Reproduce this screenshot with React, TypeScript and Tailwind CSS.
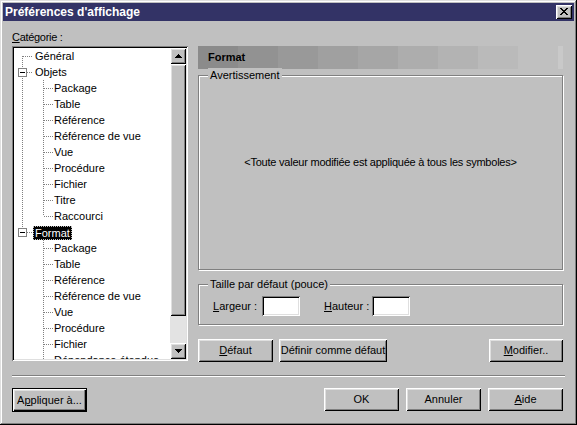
import React from 'react';

const raised =
  'shadow-[inset_1px_1px_0_#fff,inset_-1px_-1px_0_#000,inset_2px_2px_0_#dfdfdf,inset_-2px_-2px_0_#808080]';
const sunken =
  'shadow-[inset_1px_1px_0_#808080,inset_-1px_-1px_0_#fff,inset_2px_2px_0_#000,inset_-2px_-2px_0_#dfdfdf]';

type Row = { label: string; level: 0 | 1; box?: boolean; selected?: boolean };

const objets = ['Package', 'Table', 'Référence', 'Référence de vue', 'Vue', 'Procédure', 'Fichier', 'Titre', 'Raccourci'];
const formats = ['Package', 'Table', 'Référence', 'Référence de vue', 'Vue', 'Procédure', 'Fichier', 'Dépendance étendue'];

const rows: Row[] = [
  { label: 'Général', level: 0 },
  { label: 'Objets', level: 0, box: true },
  ...objets.map((label) => ({ label, level: 1 as const })),
  { label: 'Format', level: 0, box: true, selected: true },
  ...formats.map((label) => ({ label, level: 1 as const })),
];

function Btn({ children, className = '' }: { children: React.ReactNode; className?: string }) {
  return (
    <button className={`${raised} bg-[#c0c0c0] h-[23px] flex items-center justify-center ${className}`}>
      {children}
    </button>
  );
}

function Group({ label, className = '', children }: { label: string; className?: string; children?: React.ReactNode }) {
  return (
    <div className={`relative border border-[#808080] shadow-[inset_1px_1px_0_#fff,1px_1px_0_#fff] ${className}`}>
      <span className="absolute -top-[8px] left-[9px] px-[2px] bg-[#c0c0c0] leading-[14px]">{label}</span>
      {children}
    </div>
  );
}

function Arrow({ down }: { down?: boolean }) {
  return (
    <svg width="7" height="4" viewBox="0 0 7 4">
      <path
        fill="#000"
        d={down ? 'M0 0h7v1H6v1H5v1H4v1H3V3H2V2H1V1H0z' : 'M3 0h1v1h1v1h1v1h1v1H0V3h1V2h1V1h1z'}
      />
    </svg>
  );
}

function TreeLines() {
  const center = (i: number) => i * 16 + 8;
  const dot = '#808080';
  const formatIdx = rows.findIndex((r) => r.label === 'Format');
  return (
    <svg className="absolute left-0 top-0" width="156" height="330" shapeRendering="crispEdges">
      {/* root vertical */}
      <line x1="8.5" y1={center(0)} x2="8.5" y2={center(formatIdx)} stroke={dot} strokeDasharray="1 1" />
      {/* children verticals */}
      <line x1="29.5" y1={center(1) + 8} x2="29.5" y2={center(formatIdx - 1)} stroke={dot} strokeDasharray="1 1" />
      <line x1="29.5" y1={center(formatIdx) + 8} x2="29.5" y2="330" stroke={dot} strokeDasharray="1 1" />
      {rows.map((r, i) => {
        const y = center(i) + 0.5;
        if (r.level === 1) {
          return <line key={i} x1="30" y1={y} x2="39" y2={y} stroke={dot} strokeDasharray="1 1" />;
        }
        return (
          <g key={i}>
            <line x1={r.box ? 13 : 9} y1={y} x2="19" y2={y} stroke={dot} strokeDasharray="1 1" />
            {r.box && (
              <>
                <rect x="4.5" y={center(i) - 3.5} width="8" height="8" fill="#fff" stroke="#808080" />
                <line x1="6" y1={y} x2="11" y2={y} stroke="#000" />
              </>
            )}
          </g>
        );
      })}
    </svg>
  );
}

function Tree() {
  return (
    <div className={`h-[315px] ${sunken} bg-white p-[2px] flex`}>
      <div className="relative w-[156px] h-[311px] overflow-hidden bg-white">
        <TreeLines />
        <div className="relative">
          {rows.map((r, i) => (
            <div
              key={i}
              className={`h-[16px] leading-[16px] whitespace-nowrap ${
                r.level === 1 ? 'pl-[40px]' : r.selected ? 'pl-[19px] pt-[1px]' : 'pl-[21px]'
              }`}
            >
              {r.selected ? (
                <span className="inline-block h-[14px] leading-[14px] px-[2px] bg-black text-white outline-1 outline-dotted outline-[#c0c0c0] -outline-offset-1">
                  {r.label}
                </span>
              ) : (
                r.label
              )}
            </div>
          ))}
        </div>
      </div>
      <div className="w-[16px] h-[311px] flex flex-col">
        <div className={`h-[16px] ${raised} bg-[#c0c0c0] flex items-center justify-center`}>
          <Arrow />
        </div>
        <div className={`h-[252px] ${raised} bg-[#c0c0c0]`} />
        <div className="flex-1 bg-[#e3e3e3]" />
        <div className={`h-[16px] ${raised} bg-[#c0c0c0] flex items-center justify-center`}>
          <Arrow down />
        </div>
      </div>
    </div>
  );
}

export default function App() {
  const bands = ['#8b8b8b', '#929292', '#999999', '#a0a0a0', '#a6a6a6', '#adadad', '#b3b3b3', '#bababa'];
  return (
    <div className="w-[577px] h-[425px] bg-[#c0c0c0] p-[3px] flex flex-col font-['Liberation_Sans',Arial,sans-serif] text-[11px] text-black shadow-[inset_-1px_-1px_0_#000,inset_1px_1px_0_#dfdfdf,inset_-2px_-2px_0_#808080,inset_2px_2px_0_#fff]">
      {/* title bar */}
      <div className="h-[18px] bg-[#333366] flex items-center justify-between pl-[2px] pr-[2px]">
        <span className="text-white font-bold text-[12px] leading-[18px]">Préférences d'affichage</span>
        <button className={`w-[16px] h-[14px] ${raised} bg-[#c0c0c0] flex items-center justify-center pb-[1px]`}>
          <svg width="8" height="7" viewBox="0 0 8 7" shapeRendering="crispEdges">
            <path
              fill="#000"
              d="M0 0h2v1h1v1h2V1h1V0h2v1H7v1H6v1H5v1h1v1h1v1h1v1H6V6H5V5H3v1H2v1H0V6h1V5h1V4h1V3H2V2H1V1H0z"
            />
          </svg>
        </button>
      </div>

      <div className="pl-[9px]">
        <div className="mt-[9px] flex gap-[10px]">
          <div className="w-[176px]">
            <div className="h-[16px] leading-[14px] tracking-[-0.3px]">
              <span className="underline">C</span>atégorie :
            </div>
            <Tree />
          </div>

          <div className="w-[365px] mt-[16px] flex flex-col">
            <div className="h-[23px] flex">
              {bands.map((c, i) => (
                <div key={i} className="w-[40px] h-full" style={{ backgroundColor: c }} />
              ))}
              <div className="flex-1" />
              <div className="w-[5px] h-full bg-[#c9c9c9]" />
            </div>
            <div className="h-[23px] -mt-[23px] relative pl-[10px] font-bold leading-[23px]">Format</div>

            <Group label="Avertissement" className="mt-[6px] h-[195px] flex items-center justify-center pb-[20px]">
              <span className="tracking-[-0.23px]">&lt;Toute valeur modifiée est appliquée à tous les symboles&gt;</span>
            </Group>

            <Group label="Taille par défaut (pouce)" className="mt-[14px] h-[41px] pt-[11px] pl-[14px]">
              <div className="h-[20px] flex items-center">
                <span className="w-[49px]">
                  <span className="underline">L</span>argeur :
                </span>
                <div className={`w-[38px] h-[20px] bg-white ${sunken}`} />
                <span className="ml-[24px] w-[48px]">
                  <span className="underline">H</span>auteur :
                </span>
                <div className={`w-[38px] h-[20px] bg-white ${sunken}`} />
              </div>
            </Group>

            <div className="mt-[14px] flex">
              <Btn className="w-[75px]">
                <span className="underline">D</span>éfaut
              </Btn>
              <Btn className="w-[108px] ml-[6px]">Définir comme défaut</Btn>
              <Btn className="w-[74px] ml-auto">
                <span className="underline">M</span>odifier..
              </Btn>
            </div>
          </div>
        </div>

        <div className="mt-[13px] w-[553px] h-[2px] border-t border-t-[#808080] border-b border-b-white" />

        <div className="mt-[11px] w-[551px] flex">
          <button className="w-[75px] h-[24px] bg-[#c0c0c0] flex items-center justify-center shadow-[inset_0_0_0_1px_#000,inset_2px_2px_0_#fff,inset_-2px_-2px_0_#000,inset_-3px_-3px_0_#808080,inset_3px_3px_0_#dfdfdf]">
            A<span className="underline">p</span>pliquer à...
          </button>
          <Btn className="w-[75px] ml-auto">OK</Btn>
          <Btn className="w-[75px] ml-[7px]">Annuler</Btn>
          <Btn className="w-[75px] ml-[7px]">
            <span className="underline">A</span>ide
          </Btn>
        </div>
      </div>
    </div>
  );
}
